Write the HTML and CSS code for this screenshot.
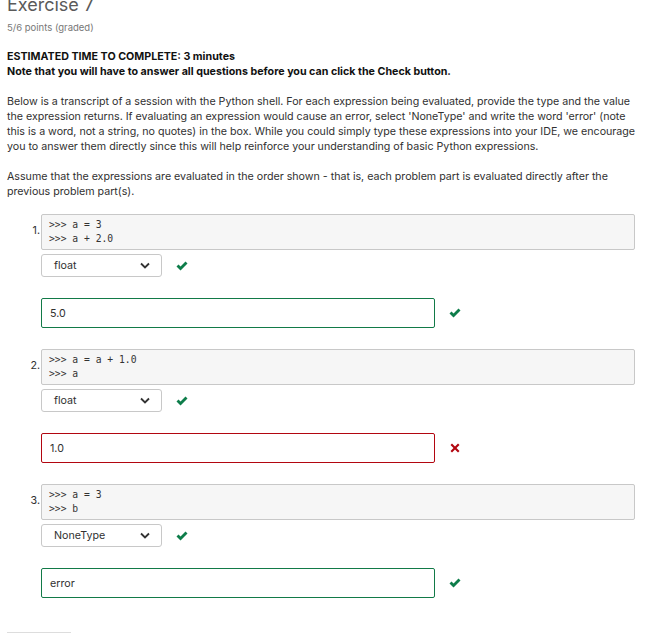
FILE: index.html
```html
<!DOCTYPE html>
<html>
<head>
<meta charset="utf-8">
<link rel="stylesheet" href="styles.css">
</head>
<body>
<div class="page">
  <h2 class="title">Exercise 7</h2>
  <div class="points">5/6 points (graded)</div>
  <p class="strong">ESTIMATED TIME TO COMPLETE: 3 minutes<br>Note that you will have to answer all questions before you can click the Check button.</p>
  <p class="para">Below is a transcript of a session with the Python shell. For each expression being evaluated, provide the type and the value the expression returns. If evaluating an expression would cause an error, select 'NoneType' and write the word 'error' (note this is a word, not a string, no quotes) in the box. While you could simply type these expressions into your IDE, we encourage you to answer them directly since this will help reinforce your understanding of basic Python expressions.</p>
  <p class="para">Assume that the expressions are evaluated in the order shown - that is, each problem part is evaluated directly after the previous problem part(s).</p>

  <div class="problems">
  <div class="problem">
    <div class="head"><span class="num">1.</span><pre class="code">&gt;&gt;&gt; a = 3
&gt;&gt;&gt; a + 2.0</pre></div>
    <div class="row sel-row">
      <div class="select"><span>float</span><svg class="chev" width="10" height="7" viewBox="0 0 10 7"><path d="M1 1.5 L5 5.5 L9 1.5" fill="none" stroke="#333" stroke-width="1.8"/></svg></div>
      <svg class="ok" width="12" height="10" viewBox="0 0 12 10"><path d="M0.5 5.5 L2.5 3.5 L4.5 5.5 L9.5 0.5 L11.5 2.5 L4.5 9.5 Z" fill="#0d7d4a"/></svg>
    </div>
    <div class="row in-row">
      <div class="input good">5.0</div>
      <svg class="ok" width="12" height="10" viewBox="0 0 12 10"><path d="M0.5 5.5 L2.5 3.5 L4.5 5.5 L9.5 0.5 L11.5 2.5 L4.5 9.5 Z" fill="#0d7d4a"/></svg>
    </div>
  </div>

  <div class="problem">
    <div class="head"><span class="num">2.</span><pre class="code">&gt;&gt;&gt; a = a + 1.0
&gt;&gt;&gt; a</pre></div>
    <div class="row sel-row">
      <div class="select"><span>float</span><svg class="chev" width="10" height="7" viewBox="0 0 10 7"><path d="M1 1.5 L5 5.5 L9 1.5" fill="none" stroke="#333" stroke-width="1.8"/></svg></div>
      <svg class="ok" width="12" height="10" viewBox="0 0 12 10"><path d="M0.5 5.5 L2.5 3.5 L4.5 5.5 L9.5 0.5 L11.5 2.5 L4.5 9.5 Z" fill="#0d7d4a"/></svg>
    </div>
    <div class="row in-row">
      <div class="input bad">1.0</div>
      <svg class="no" width="10" height="10" viewBox="0 0 10 10"><path d="M2 0.5 L5 3.5 L8 0.5 L9.5 2 L6.5 5 L9.5 8 L8 9.5 L5 6.5 L2 9.5 L0.5 8 L3.5 5 L0.5 2 Z" fill="#b20610"/></svg>
    </div>
  </div>

  <div class="problem">
    <div class="head"><span class="num">3.</span><pre class="code">&gt;&gt;&gt; a = 3
&gt;&gt;&gt; b</pre></div>
    <div class="row sel-row">
      <div class="select"><span>NoneType</span><svg class="chev" width="10" height="7" viewBox="0 0 10 7"><path d="M1 1.5 L5 5.5 L9 1.5" fill="none" stroke="#333" stroke-width="1.8"/></svg></div>
      <svg class="ok" width="12" height="10" viewBox="0 0 12 10"><path d="M0.5 5.5 L2.5 3.5 L4.5 5.5 L9.5 0.5 L11.5 2.5 L4.5 9.5 Z" fill="#0d7d4a"/></svg>
    </div>
    <div class="row in-row">
      <div class="input good">error</div>
      <svg class="ok" width="12" height="10" viewBox="0 0 12 10"><path d="M0.5 5.5 L2.5 3.5 L4.5 5.5 L9.5 0.5 L11.5 2.5 L4.5 9.5 Z" fill="#0d7d4a"/></svg>
    </div>
  </div>
  </div>

  <div class="btn-top"></div>
</div>
</body>
</html>
```

FILE: styles.css
```css
* { box-sizing: border-box; }
html, body { margin: 0; padding: 0; background: #fff; }
body {
  font-family: Inter, "Open Sans", sans-serif;
  color: #313131;
  font-size: 10.7px;
  line-height: 15px;
}
.page {
  padding: 0 18px 0 7px;
  margin-top: -6px;
}
.title {
  margin: 0;
  font-size: 18px;
  line-height: 22px;
  font-weight: 400;
  color: #5a5a5a;
}
.points {
  margin-top: 5px;
  font-size: 9.5px;
  line-height: 14px;
  color: #777;
}
.strong {
  margin: 14px 0 0;
  font-weight: 700;
  color: #111;
}
.para {
  margin: 15px -4px 0 0;
  letter-spacing: -0.02px;
}
.problems {
  margin-top: 15px;
}
.problem + .problem {
  margin-top: 21px;
}
.head {
  display: flex;
  align-items: center;
}
.num {
  width: 34px;
  text-align: right;
  padding-right: 1px;
  padding-bottom: 4px;
}
.code {
  margin: 0;
  flex: 1;
  background: #f6f6f6;
  border: 1px solid #c8c8c8;
  border-radius: 2px;
  padding: 3px 7px 3px;
  font-family: "DejaVu Sans Mono", monospace;
  font-size: 9.7px;
  line-height: 14px;
  color: #333;
  height: 36px;
}
.row {
  display: flex;
  align-items: center;
  margin-left: 34px;
}
.sel-row { margin-top: 4px; }
.in-row { margin-top: 21px; }
.select {
  width: 121px;
  height: 23px;
  border: 1px solid #c8c8c8;
  border-radius: 3px;
  display: flex;
  align-items: center;
  justify-content: space-between;
  padding: 0 11px 0 12px;
  color: #313131;
}
.chev { display: block; }
.sel-row .ok { margin-left: 14px; }
.input {
  width: 394px;
  height: 30px;
  border: 1px solid;
  border-radius: 2px;
  display: flex;
  align-items: center;
  padding: 0 8px;
  color: #313131;
}
.input.good { border-color: #127a48; }
.input.bad { border-color: #b20610; }
.in-row .ok { margin-left: 14px; }
.in-row .no { margin-left: 15px; }
.btn-top {
  margin-top: 34px;
  width: 64px;
  border-top: 1px solid #ddd;
}
```
